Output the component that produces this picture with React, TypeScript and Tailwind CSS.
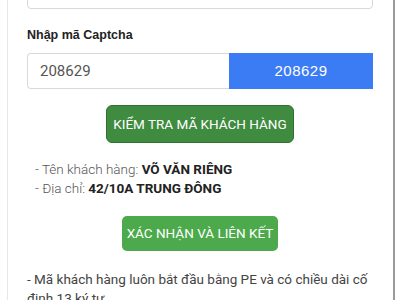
import React from 'react';

export default function App() {
  return (
    <div className="h-[300px] w-[400px] overflow-hidden bg-white font-['Roboto',sans-serif]">
      <div className="ml-[7px] mr-[5px] flow-root h-full border-l border-l-gray-200 border-r-2 border-r-[#9a9a9a] pl-[19px] pr-[20px]">
        {/* previous field, scrolled off the top */}
        <div className="-mt-[30px] h-[39px] rounded border border-[#d9d9d9] bg-white" />

        <label className="mt-[18px] block font-['Liberation_Sans',Arial,sans-serif] text-[12.5px] font-bold leading-[16px] text-[#222]">
          Nhập mã Captcha
        </label>

        <div className="mt-[10px] flex h-[36px]">
          <input
            defaultValue="208629"
            className="w-[202px] rounded-l border border-r-0 border-[#d9d9d9] px-[12px] text-[15px] text-[#555] outline-none"
          />
          <div className="flex flex-1 items-center justify-center bg-[#3b7cf4] font-['Liberation_Sans',Arial,sans-serif] text-[15px] tracking-[0.5px] text-white">
            208629
          </div>
        </div>

        <div className="mt-[16px] flex justify-center">
          <button className="h-[38px] rounded-[6px] border border-[#2f6f2f] bg-[#3f8b3f] px-[6px] text-[13.5px] text-white">
            KIỂM TRA MÃ KHÁCH HÀNG
          </button>
        </div>

        <div className="mt-[17px] pl-[8px] text-[13.5px] leading-[19px] text-[#555]">
          <div className="font-light">
            - Tên khách hàng: <b className="font-bold text-[#222]">VÕ VĂN RIÊNG</b>
          </div>
          <div className="font-light">
            - Địa chỉ: <b className="font-bold text-[#222]">42/10A TRUNG ĐÔNG</b>
          </div>
        </div>

        <div className="mt-[18px] flex justify-center">
          <button className="h-[35px] rounded-[5px] bg-[#4caa4c] px-[5px] text-[13.5px] text-white">
            XÁC NHẬN VÀ LIÊN KẾT
          </button>
        </div>

        <p className="mt-[19px] text-[13.5px] leading-[19px] text-[#444]">
          - Mã khách hàng luôn bắt đầu bằng PE và có chiều dài cố định 13 ký tự
        </p>
      </div>
    </div>
  );
}
